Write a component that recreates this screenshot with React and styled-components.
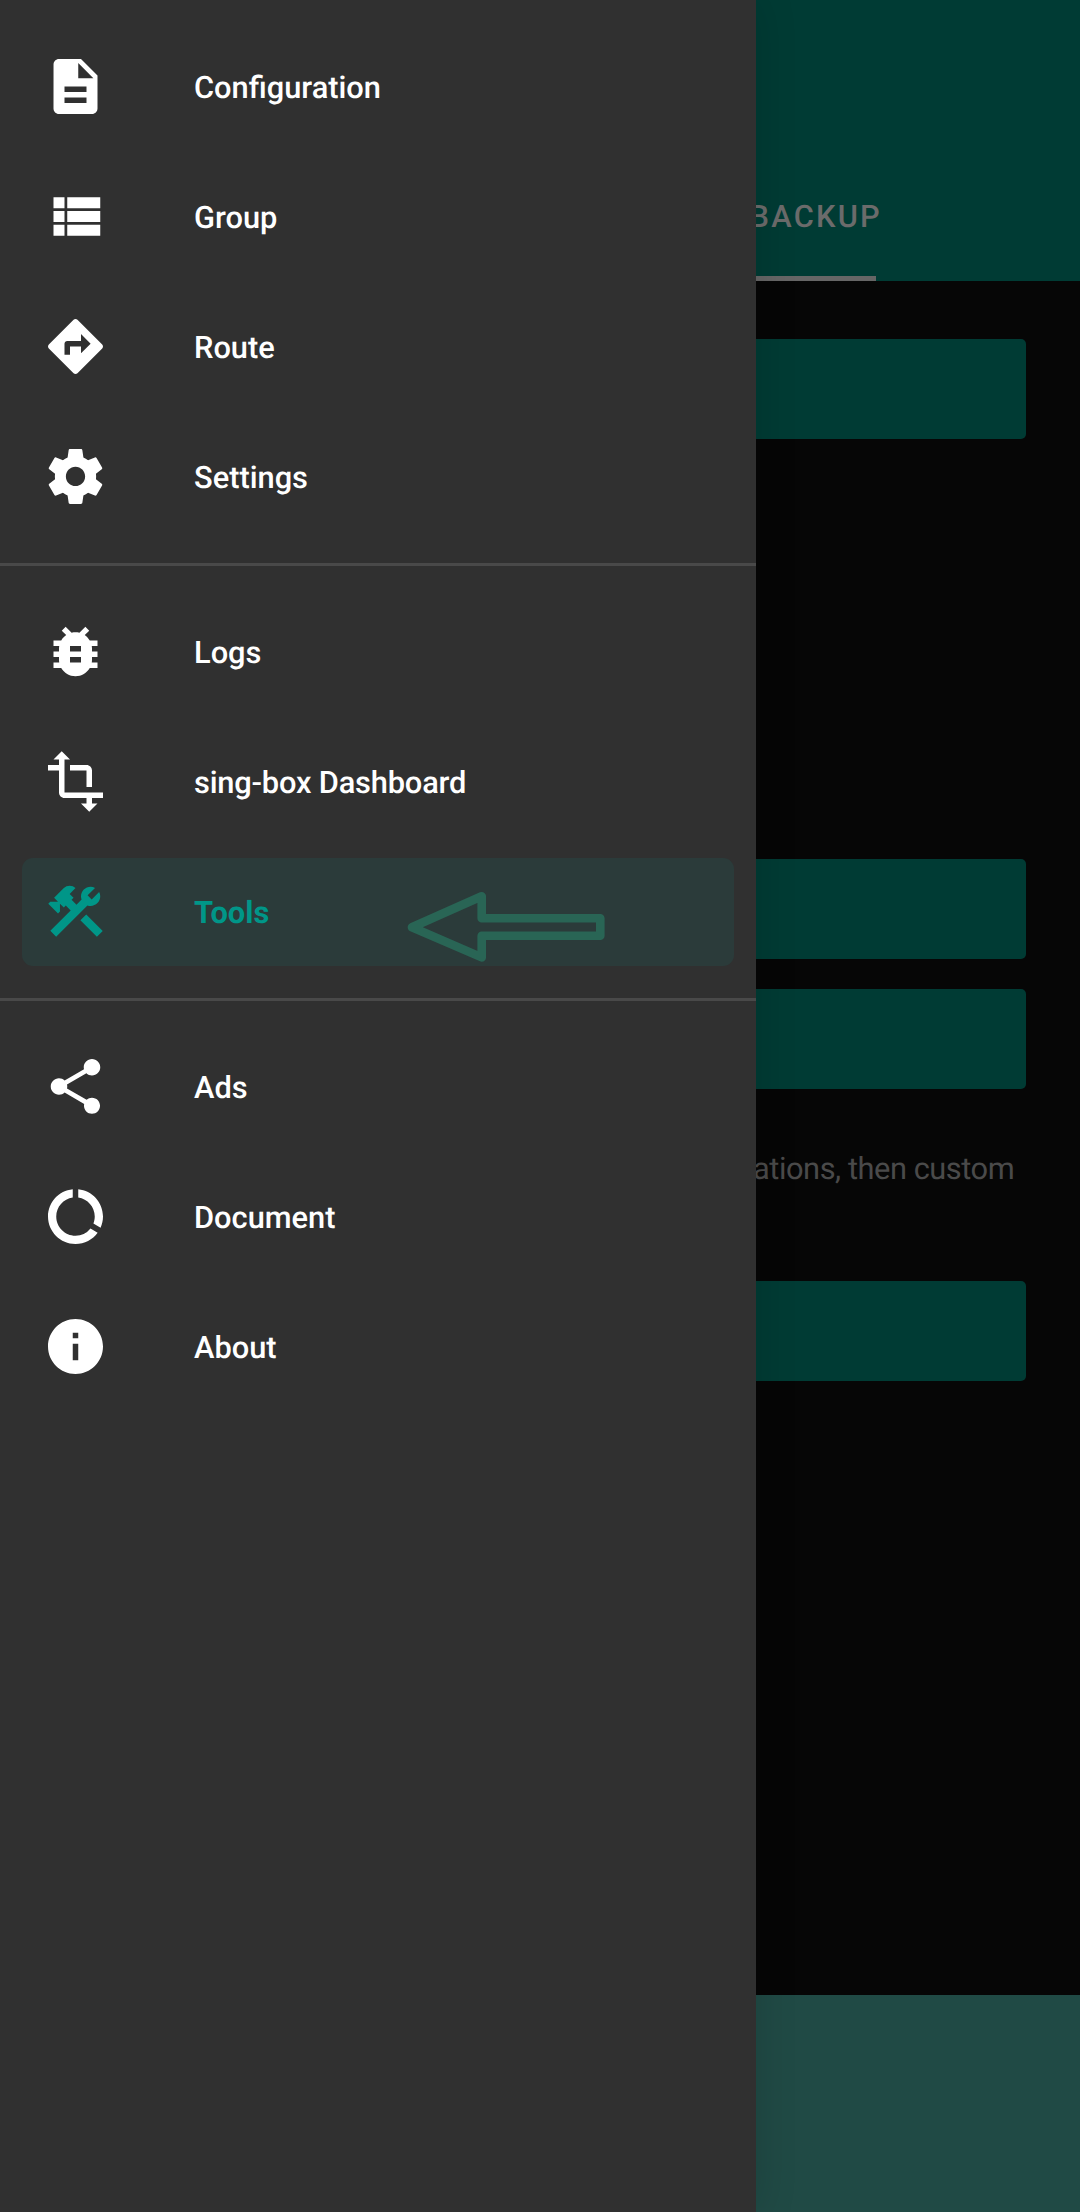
import React from "react";
import styled, { createGlobalStyle } from "styled-components";
import {
  MdDescription, MdBugReport, MdTransform, MdConstruction,
  MdShare, MdDataUsage, MdInfo,
} from "react-icons/md";

const GlobalStyle = createGlobalStyle`
  * { box-sizing: border-box; }
  body {
    margin: 0;
    background: #060606;
    font-family: Roboto, "Noto Sans", sans-serif;
    text-rendering: geometricPrecision;
  }
`;

const Screen = styled.div`
  display: flex;
  width: 1080px;
  height: 2212px;
  overflow: hidden;
`;

const Drawer = styled.nav`
  position: relative;
  z-index: 1;
  flex: none;
  width: 756px;
  height: 100%;
  padding-top: 22px;
  background: #303030;
  box-shadow: 0 0 40px rgba(0, 0, 0, 0.14);
`;

const Group = styled.div`
  display: flex;
  flex-direction: column;
  padding: 11px 22px;
  gap: 22px;
`;

const Divider = styled.hr`
  height: 3px;
  margin: 21px 0;
  border: 0;
  background: #494949;
`;

const Item = styled.a`
  position: relative;
  display: flex;
  align-items: center;
  height: 108px;
  padding-left: 20px;
  border-radius: 11px;
  color: ${(p) => (p.$active ? "#009688" : "#ffffff")};
  background: ${(p) => (p.$active ? "#2b3b3a" : "transparent")};
`;

const IconBox = styled.span`
  display: flex;
  flex: none;
  width: 68px;
  height: 68px;

  & > svg { width: 68px; height: 68px; }
`;

const Label = styled.span`
  margin-left: 84px;
  padding-top: 1px;
  font-size: 30.8px;
  font-weight: ${(p) => (p.$active ? 700 : 500)};
  line-height: 40px;
  letter-spacing: ${(p) => p.$tracking || "normal"};
  white-space: nowrap;
`;

/* Hand-drawn pointer laid over the selected row */
const Arrow = styled.svg`
  position: absolute;
  left: 383px;
  top: 32px;
  width: 202px;
  height: 74px;
`;

const Page = styled.main`
  flex: 1;
  display: flex;
  flex-direction: column;
  min-width: 0;
  background: #060606;
`;

const Header = styled.header`
  display: flex;
  flex-direction: column;
  justify-content: flex-end;
  height: 281px;
  background: #003b34;
`;

const Tab = styled.div`
  margin-left: -6.5px;
  height: 77px;
  color: #6b6b6b;
  font-size: 30.8px;
  font-weight: 500;
  line-height: 36px;
  letter-spacing: 2.25px;
`;

const Indicator = styled.div`
  width: 120px;
  height: 5px;
  background: #666666;
`;

const Content = styled.section`
  flex: 1;
  display: flex;
  flex-direction: column;
  padding-right: 54px;
`;

const Action = styled.div`
  flex: none;
  height: 100px;
  margin-top: ${(p) => p.$gap}px;
  border-radius: 0 5px 5px 0;
  background: #003b34;
`;

const Hint = styled.p`
  margin: 60px 0 0 -3px;
  height: 40px;
  color: #4a4a4a;
  font-size: 30.8px;
  line-height: 40px;
  letter-spacing: -0.45px;
  white-space: nowrap;
`;

const BottomBar = styled.footer`
  height: 217px;
  background: #204a45;
`;

/* 24-unit glyph grid at 2.75px per unit, inset by half a pixel */
const GRID = "-0.1818 -0.1818 24.7273 24.7273";

const glyph = (d) => (props) => (
  <svg fill="currentColor" {...props}>
    <path d={d} />
  </svg>
);

const ListIcon = glyph("M4 14h4v-4H4v4zm0 5h4v-4H4v4zM4 9h4V5H4v4zm5 5h12v-4H9v4zm0 5h12v-4H9v4zM9 5v4h12V5H9z");
const RouteIcon = glyph("M21.71 11.29l-9-9c-.39-.39-1.02-.39-1.41 0l-9 9c-.39.39-.39 1.02 0 1.41l9 9c.39.39 1.02.39 1.41 0l9-9c.39-.38.39-1.01 0-1.41zM14 14.5V12h-4v3H8v-4c0-.55.45-1 1-1h5V7.5l3.5 3.5-3.5 3.5z");
const GearIcon = glyph("M19.43 12.98c.04-.32.07-.64.07-.98s-.03-.66-.07-.98l2.11-1.65c.19-.15.24-.42.12-.64l-2-3.46c-.12-.22-.39-.3-.61-.22l-2.49 1c-.52-.4-1.08-.73-1.69-.98l-.38-2.65C14.46 2.18 14.25 2 14 2h-4c-.25 0-.46.18-.49.42l-.38 2.65c-.61.25-1.17.59-1.69.98l-2.49-1c-.23-.09-.49 0-.61.22l-2 3.46c-.13.22-.07.49.12.64l2.11 1.65c-.04.32-.07.65-.07.98s.03.66.07.98l-2.11 1.65c-.19.15-.24.42-.12.64l2 3.46c.12.22.39.3.61.22l2.49-1c.52.4 1.08.73 1.69.98l.38 2.65c.03.24.24.42.49.42h4c.25 0 .46-.18.49-.42l.38-2.65c.61-.25 1.17-.59 1.69-.98l2.49 1c.23.09.49 0 .61-.22l2-3.46c.12-.22.07-.49-.12-.64l-2.11-1.65zM12 15.5c-1.93 0-3.5-1.57-3.5-3.5s1.57-3.5 3.5-3.5 3.5 1.57 3.5 3.5-1.57 3.5-3.5 3.5z");

const MenuItem = ({ icon: Icon, label, active, tracking, children }) => (
  <Item $active={active}>
    <IconBox>
      <Icon viewBox={GRID} />
    </IconBox>
    <Label $active={active} $tracking={tracking}>{label}</Label>
    {children}
  </Item>
);

export default function App() {
  return (
    <Screen>
      <GlobalStyle />
      <Drawer>
        <Group>
          <MenuItem icon={MdDescription} label="Configuration" />
          <MenuItem icon={ListIcon} label="Group" />
          <MenuItem icon={RouteIcon} label="Route" />
          <MenuItem icon={GearIcon} label="Settings" />
        </Group>
        <Divider />
        <Group>
          <MenuItem icon={MdBugReport} label="Logs" />
          <MenuItem icon={MdTransform} label="sing-box Dashboard" tracking="-0.18px" />
          <MenuItem icon={MdConstruction} label="Tools" active>
            <Arrow viewBox="0 0 202 74" fill="none" stroke="#296555" strokeWidth="8.6" strokeLinejoin="round">
              <path d="M7 37.3 L76.7 6.2 V28.3 H195.3 V45.7 H76.7 V67.4 Z" />
            </Arrow>
          </MenuItem>
        </Group>
        <Divider />
        <Group>
          <MenuItem icon={MdShare} label="Ads" />
          <MenuItem icon={MdDataUsage} label="Document" />
          <MenuItem icon={MdInfo} label="About" />
        </Group>
      </Drawer>
      <Page>
        <Header>
          <Tab>BACKUP</Tab>
          <Indicator />
        </Header>
        <Content>
          <Action $gap={58} />
          <Action $gap={420} />
          <Action $gap={30} />
          <Hint>ations, then custom</Hint>
          <Action $gap={92} />
        </Content>
        <BottomBar />
      </Page>
    </Screen>
  );
}
